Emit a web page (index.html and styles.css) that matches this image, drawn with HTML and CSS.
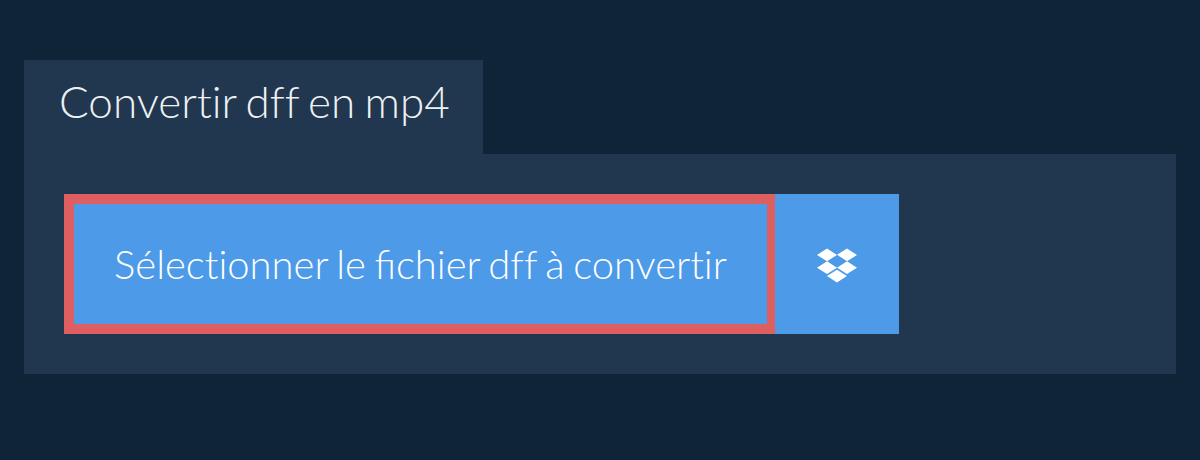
FILE: index.html
```html
<!DOCTYPE html>
<html lang="fr">
<head>
<meta charset="utf-8">
<title>Convertir dff en mp4</title>
<link rel="stylesheet" href="styles.css">
</head>
<body>
<main class="converter">
  <h1 class="tab">Convertir dff en mp4</h1>
  <section class="panel">
    <div class="actions">
      <button class="select">Sélectionner le <span class="ligature">fi</span>chier dff à convertir</button>
      <button class="dropbox" aria-label="Dropbox">
        <svg class="dropbox-icon" viewBox="0 0 528 512" aria-hidden="true"><path d="M264.4 116.3l-132 84.3 132 84.3-132 84.3L0 284.1l132.3-84.3L0 116.3 132.3 32l132.1 84.3zM131.6 395.7l132-84.3 132 84.3-132 84.3-132-84.3zm132.8-111.6l132-84.3-132-84.3L396 32l132 84.3-132 84.3L528 285l-132 84.3-131.6-85.2z"/></svg>
      </button>
    </div>
  </section>
</main>
</body>
</html>
```
FILE: styles.css
```css
* { box-sizing: border-box; }
html, body { height: 100%; }
body {
  margin: 0;
  background: #102437;
  font-family: "Lato", "Liberation Sans", sans-serif;
  font-weight: 300;
  font-variant-ligatures: no-common-ligatures;
}
.converter { padding: 60px 24px 0; }
.tab {
  display: inline-block;
  vertical-align: top;
  margin: 0;
  width: 459px;
  height: 94px;
  padding: 0 35px;
  background: #21374f;
  color: #eef1f4;
  font-size: 44px;
  font-weight: 300;
  line-height: 82px;
  word-spacing: -2.7px;
  white-space: nowrap;
}
.panel {
  height: 220px;
  padding: 40px;
  background: #21374f;
}
.actions { display: flex; height: 140px; }
button { font-family: inherit; font-variant-ligatures: inherit; cursor: pointer; margin: 0; }
.select {
  width: 711px;
  height: 140px;
  padding: 0;
  background: #4c9ae8;
  border: solid #dd5f5f;
  border-width: 10px 8px 10px 10px;
  color: #fff;
  font-size: 40px;
  font-weight: 300;
  word-spacing: -2.4px;
  white-space: nowrap;
}
.ligature { font-variant-ligatures: common-ligatures; }
.dropbox {
  display: flex;
  align-items: center;
  justify-content: center;
  width: 124px;
  height: 140px;
  padding: 3px 0 0;
  border: 0;
  background: #4c9ae8;
}
.dropbox-icon { width: 40px; height: 39px; fill: #fff; }
```
